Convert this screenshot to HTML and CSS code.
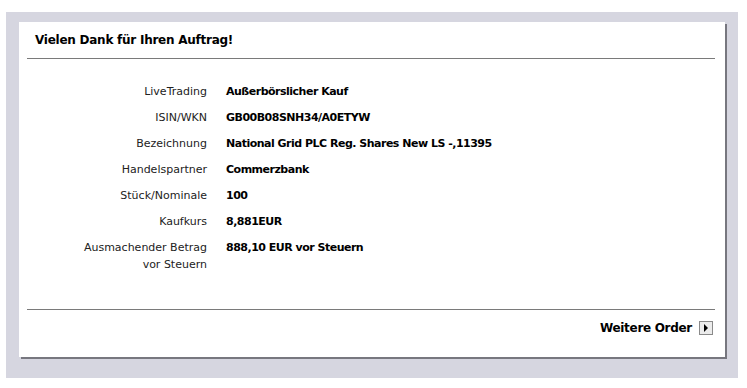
FILE: index.html
```html
<!DOCTYPE html>
<html>
<head>
<title>Auftrag</title>
<link rel="stylesheet" href="styles.css">
</head>
<body>
<div class="panel">
  <div class="card">
    <h1 class="title">Vielen Dank für Ihren Auftrag!</h1>
    <div class="details">
      <div class="row"><span class="label">LiveTrading</span><span class="value">Außerbörslicher Kauf</span></div>
      <div class="row"><span class="label">ISIN/WKN</span><span class="value">GB00B08SNH34/A0ETYW</span></div>
      <div class="row"><span class="label">Bezeichnung</span><span class="value">National Grid PLC Reg. Shares New LS -,11395</span></div>
      <div class="row"><span class="label">Handelspartner</span><span class="value">Commerzbank</span></div>
      <div class="row"><span class="label">Stück/Nominale</span><span class="value">100</span></div>
      <div class="row"><span class="label">Kaufkurs</span><span class="value">8,881EUR</span></div>
      <div class="row"><span class="label">Ausmachender Betrag<br>vor Steuern</span><span class="value">888,10 EUR vor Steuern</span></div>
    </div>
    <div class="footer">
      <a class="next-link" href="#">Weitere Order</a>
      <span class="next-button">
        <svg width="6" height="8" viewBox="0 0 6 8"><path d="M1 0 L5 4 L1 8 Z" fill="#000"/></svg>
      </span>
    </div>
  </div>
</div>
</body>
</html>
```

FILE: styles.css
```css
body {
  margin: 0;
  background-color: white;
  font-family: Verdana, "DejaVu Sans", sans-serif;
  color: #000;
}

.panel {
  margin: 12px 9px 10px 6px;
  background-color: #d6d6e0;
  padding: 10px 13px 21px 13px;
}

.card {
  background-color: white;
  box-shadow: 2px 2px 0 #77777f;
  height: 335px;
  display: flex;
  flex-direction: column;
}

.title {
  margin: 0 10px 0 8px;
  padding-left: 8px;
  height: 36px;
  line-height: 36px;
  font-size: 12px;
  font-weight: bold;
  letter-spacing: -0.25px;
  border-bottom: 1px solid #7a7a7a;
}

.details {
  padding-top: 19px;
  flex-grow: 1;
  margin: 0 10px 0 8px;
  border-bottom: 1px solid #7a7a7a;
}

.row {
  display: flex;
  gap: 19px;
  padding: 5px 0 4px;
  font-size: 11px;
  line-height: 17px;
}

.label {
  width: 180px;
  text-align: right;
  color: #222;
}

.value {
  font-weight: bold;
  letter-spacing: -0.5px;
}

.footer {
  height: 47px;
  display: flex;
  justify-content: flex-end;
  align-items: center;
  gap: 7px;
  padding: 0 12px 12px 0;
  box-sizing: border-box;
}

.next-link {
  color: #000;
  text-decoration: none;
  font-size: 12px;
  font-weight: bold;
  letter-spacing: -0.3px;
}

.next-button {
  width: 12px;
  height: 12px;
  border: 1px solid #8a8a8a;
  background-color: #ececec;
  display: flex;
  justify-content: center;
  align-items: center;
}
```
